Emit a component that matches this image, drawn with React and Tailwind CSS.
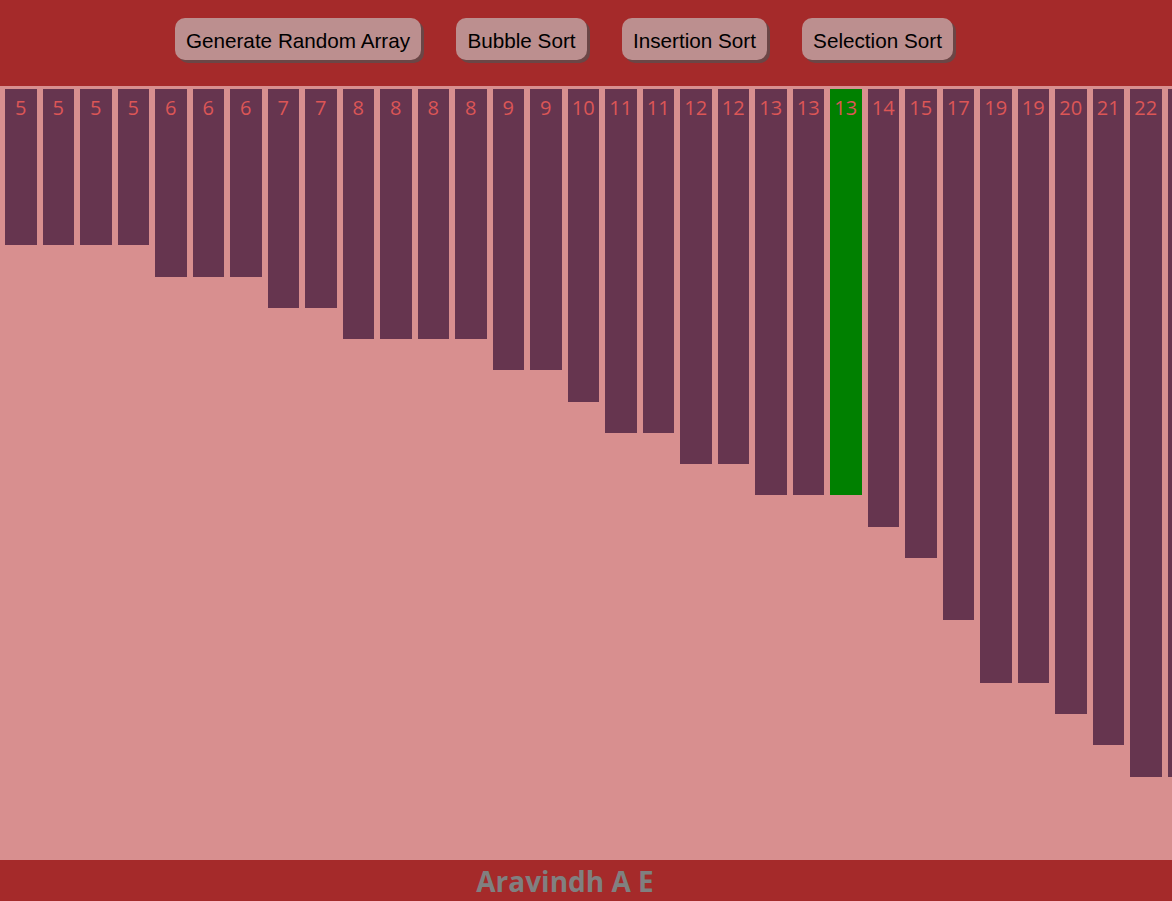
import { useMemo } from "react";

const VALUES = [5, 5, 5, 5, 6, 6, 6, 7, 7, 8, 8, 8, 8, 9, 9, 10, 11, 11, 12, 12, 13, 13, 13, 14, 15, 17, 19, 19, 20, 21, 22, 22, 23, 24];
const ACTIVE = 22;

const BUTTONS = [
  { label: "Generate Random Array", width: "w-[246px]" },
  { label: "Bubble Sort", width: "w-[131px]" },
  { label: "Insertion Sort", width: "w-[145px]" },
  { label: "Selection Sort", width: "w-[151px]" },
];

function Bar({ value, active }) {
  return (
    <div
      className={`mx-[3px] w-[31.5px] shrink-0 text-center text-[20px] leading-[38px] text-[#dc5656] ${
        active ? "bg-[#008000]" : "bg-[#66354f]"
      }`}
      style={{ height: `${value * 31.25}px` }}
    >
      {value}
    </div>
  );
}

export default function App() {
  const bars = useMemo(() => VALUES.map((value, index) => ({ value, index })), []);

  return (
    <div className="flex h-[901px] w-[1172px] flex-col overflow-hidden bg-[#d88f8f]">
      <header className="flex h-[86px] shrink-0 items-start gap-[35px] bg-[#a52a2a] pl-[175px] pt-[18px] font-['Liberation_Sans',Arial,sans-serif]">
        {BUTTONS.map((button) => (
          <button
            key={button.label}
            className={`${button.width} h-[42px] whitespace-nowrap rounded-[10px] bg-[#bc8f8f] pt-[3px] text-center text-[20.7px] text-black shadow-[3px_3px_0_#6b4646]`}
          >
            {button.label}
          </button>
        ))}
      </header>

      <main className="flex flex-1 items-start overflow-hidden pl-[2px] pt-[3px] font-['Open_Sans','Noto_Sans',sans-serif]">
        {bars.map((bar) => (
          <Bar key={bar.index} value={bar.value} active={bar.index === ACTIVE} />
        ))}
      </main>

      <footer className="flex h-[41px] shrink-0 items-center bg-[#a52a2a]">
        <div className="w-[1130px] text-center font-['Open_Sans','Noto_Sans',sans-serif] text-[28px] font-bold leading-none text-[#808080]">
          Aravindh A E
        </div>
      </footer>
    </div>
  );
}
